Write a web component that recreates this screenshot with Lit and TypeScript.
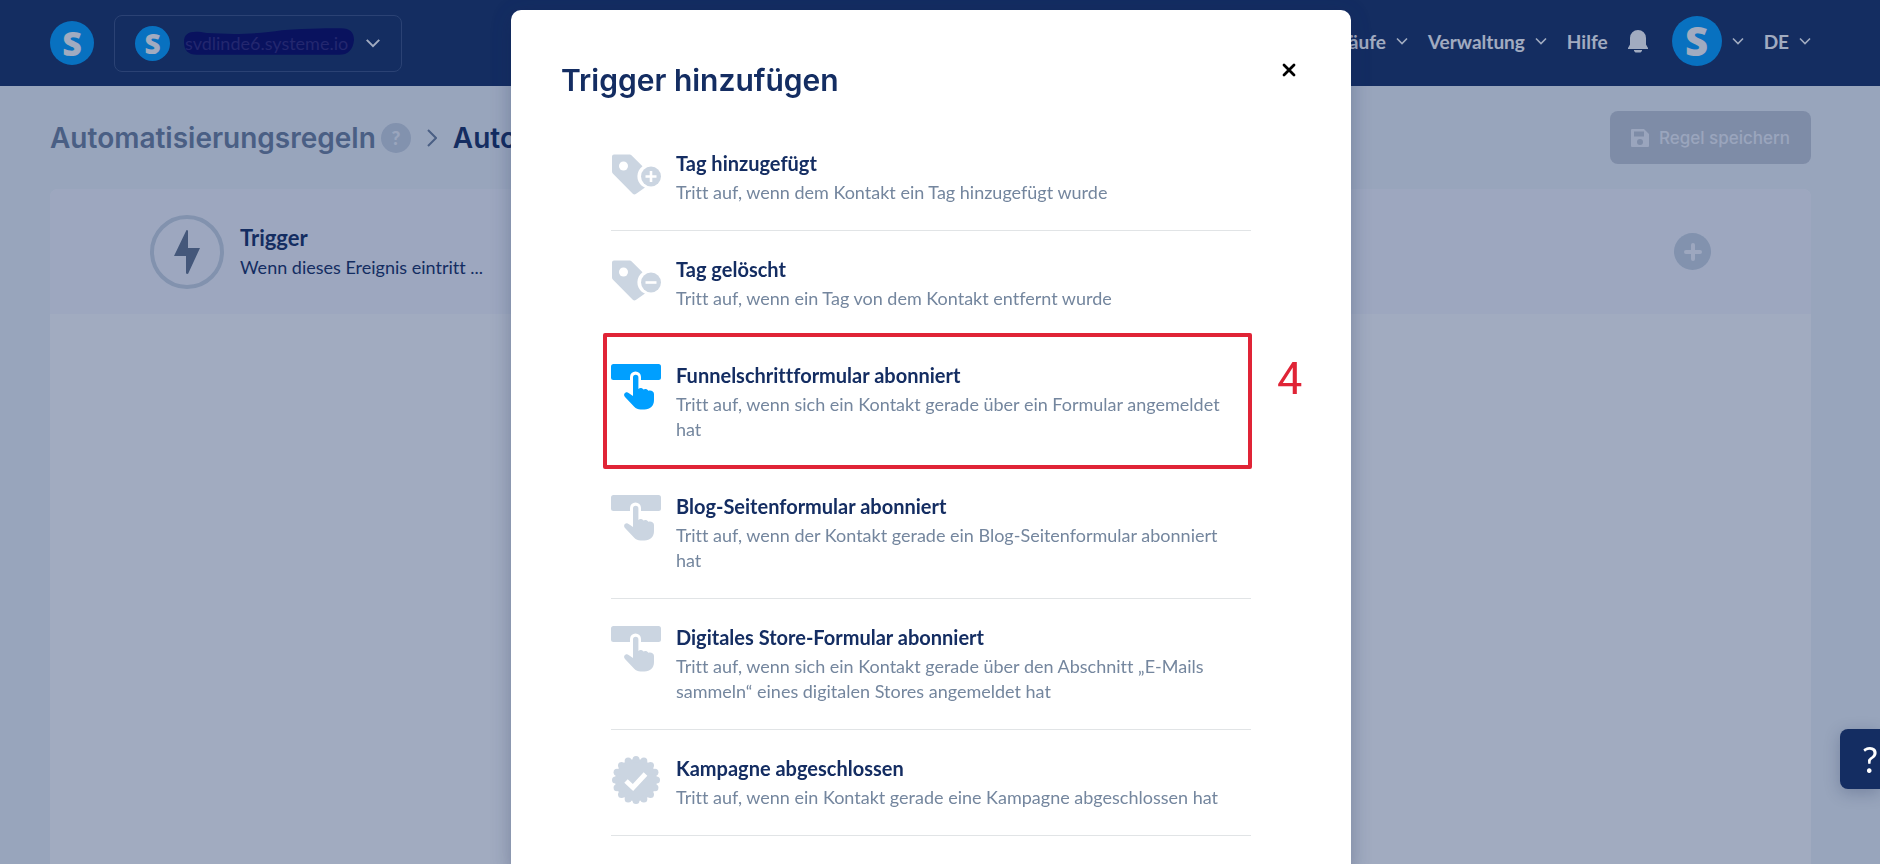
import { LitElement, html, css, svg } from "lit";
import { customElement, property } from "lit/decorators.js";
import { classMap } from "lit/directives/class-map.js";

type IconName = "tag-plus" | "tag-minus" | "press" | "badge";

interface TriggerOption {
  icon: IconName;
  title: string;
  text: string;
  selected?: boolean;
  step?: string;
}

const OPTIONS: TriggerOption[] = [
  { icon: "tag-plus", title: "Tag hinzugefügt", text: "Tritt auf, wenn dem Kontakt ein Tag hinzugefügt wurde" },
  { icon: "tag-minus", title: "Tag gelöscht", text: "Tritt auf, wenn ein Tag von dem Kontakt entfernt wurde" },
  {
    icon: "press",
    title: "Funnelschrittformular abonniert",
    text: "Tritt auf, wenn sich ein Kontakt gerade über ein Formular angemeldet hat",
    selected: true,
    step: "4",
  },
  {
    icon: "press",
    title: "Blog-Seitenformular abonniert",
    text: "Tritt auf, wenn der Kontakt gerade ein Blog-Seitenformular abonniert hat",
  },
  {
    icon: "press",
    title: "Digitales Store-Formular abonniert",
    text: "Tritt auf, wenn sich ein Kontakt gerade über den Abschnitt „E-Mails sammeln“ eines digitalen Stores angemeldet hat",
  },
  {
    icon: "badge",
    title: "Kampagne abgeschlossen",
    text: "Tritt auf, wenn ein Kontakt gerade eine Kampagne abgeschlossen hat",
  },
];

const tagShape = svg`
  <path d="M3 4.500h15.500a3 3 0 0 1 2.200.9L31.500 16.200a12.500 12.500 0 0 0-.5 19.800l3 1.500-9.200 6.500a2.500 2.500 0 0 1-3-.3L1.800 23.400A3 3 0 0 1 1 21.300V6.500a2 2 0 0 1 2-2z" fill="currentColor"/>
  <circle cx="12.500" cy="16" r="4.500" fill="#fff"/>
  <circle cx="40" cy="26.500" r="12.500" fill="#fff"/>
  <circle cx="40" cy="26.500" r="10" fill="currentColor"/>`;

// Rosette outline: sixteen rounded scallops around the centre.
const scallops = Array.from({ length: 16 }, (_, i) => {
  const a = (i * Math.PI) / 8;
  return svg`<circle cx=${25 + 20.5 * Math.sin(a)} cy=${25 - 20.5 * Math.cos(a)} r="3.500"/>`;
});

const ICONS = {
  "tag-plus": svg`${tagShape}<path d="M40 21v11M34.500 26.500h11" stroke="#fff" stroke-width="2.600"/>`,
  "tag-minus": svg`${tagShape}<path d="M34.500 26.500h11" stroke="#fff" stroke-width="2.600"/>`,
  press: svg`
    <rect x="0" y="2" width="50" height="16" rx="2.500" fill="currentColor"/>
    <path d="M19 19v-4a5.500 5.500 0 0 1 11 0v4z" fill="#fff"/>
    <path d="M22 15.500a2.700 2.700 0 0 1 5.400 0V27c1.500-1.500 4-1 5 .5 1.600-1 4-.5 4.900 1.200 2.500-.9 5.700.3 5.700 3.300v6c0 6-4 9.500-9.500 9.500h-4c-2.500 0-4.500-1-6.300-2.800L14 35c-2.500-2.800.8-6 3.600-4.100L22 34z" fill="currentColor"/>`,
  badge: svg`
    <g fill="currentColor"><circle cx="25" cy="25" r="21"/>${scallops}</g>
    <path d="M15 26l7 6.500L34.500 19" fill="none" stroke="#fff" stroke-width="5"/>`,
};

const chevron = html`<svg class="chevron" viewBox="0 0 12 8" aria-hidden="true">
  <path d="M1 1.500l5 5 5-5" fill="none" stroke="currentColor" stroke-width="1.600" />
</svg>`;

@customElement("trigger-option")
class TriggerOptionRow extends LitElement {
  @property({ attribute: false }) option!: TriggerOption;

  static styles = css`
    :host { display: block; position: relative; border-bottom: 1px solid #e1e4e6; }
    .row {
      display: flex; align-items: flex-start; gap: 15px; width: 100%;
      padding: 25px 0; border: 0; background: none; text-align: left;
      font: inherit; color: inherit; cursor: pointer;
    }
    .icon { flex: none; width: 50px; height: 50px; color: #cbd5e1; }
    .row.selected .icon { color: #009fff; }
    .body { display: flex; flex-direction: column; gap: 3px; padding-right: 10px; }
    .title { color: #142d62; font-weight: 700; font-size: 20px; line-height: 27px; }
    .text { color: #74869e; font-size: 18px; line-height: 25px; }
    .frame { position: absolute; inset: -4px -1px -2px -8px; border: 4px solid #e02436; border-radius: 2px; pointer-events: none; }
    .step { position: absolute; left: 100%; top: 16px; margin-left: 26px; color: #e02436; font: 400 45px/52px Roboto, sans-serif; }
  `;

  render() {
    const o = this.option;
    return html`
      <button class=${classMap({ row: true, selected: !!o.selected })} type="button">
        <svg class="icon" viewBox="0 0 50 50" aria-hidden="true">${ICONS[o.icon]}</svg>
        <span class="body">
          <span class="title">${o.title}</span>
          <span class="text">${o.text}</span>
        </span>
      </button>
      ${o.step ? html`<div class="frame"></div><div class="step">${o.step}</div>` : null}
    `;
  }
}

@customElement("app-root")
class AppRoot extends LitElement {
  static styles = css`
    :host {
      display: flex; flex-direction: column; height: 100vh; overflow: hidden;
      background: #f1f5f9; color: #142d62; font-family: Lato, sans-serif; font-size: 18px;
      font-variant-ligatures: none;
    }
    * { box-sizing: border-box; }
    button { font: inherit; color: inherit; background: none; border: 0; padding: 0; cursor: pointer; }
    a { color: inherit; text-decoration: none; }
    h1, h2, p { margin: 0; padding: 0; }

    .top { display: flex; align-items: center; height: 86px; padding: 0 69px 0 50px; background: #142d62; color: #fff; }
    .logo {
      display: flex; align-items: center; justify-content: center; flex: none;
      width: 44px; height: 44px; border-radius: 50%; background: #009fff; color: #fff;
      font: 800 34px/1 "Open Sans", sans-serif;
    }
    .logo.small { width: 35px; height: 35px; margin-right: 3px; font-size: 28px; }
    .logo.large { width: 50px; height: 50px; font-size: 40px; }
    .account {
      display: flex; align-items: center; gap: 10px; height: 57px; margin-left: 20px;
      padding: 0 20px; border: 1px solid #3b5180; border-radius: 8px;
    }
    .account .chevron { width: 16px; height: 10px; }
    .domain { display: grid; align-items: center; width: 172px; height: 30px; }
    .domain > * { grid-area: 1 / 1; }
    .domain span { color: #2d2478; padding-left: 2px; text-align: left; }
    .domain svg { width: 172px; height: 30px; }
    .chevron { flex: none; width: 12px; height: 8px; }
    .nav { display: flex; align-items: center; gap: 20px; margin-left: auto; margin-bottom: 4px; font-weight: 700; font-size: 19px; }
    .nav button { display: flex; align-items: center; gap: 10px; }
    .bell { width: 20px; height: 23px; display: block; }
    .nav .avatar { margin-left: 4px; }

    .crumbs { display: flex; align-items: center; padding: 25px 69px 25px 50px; font-family: Inter, sans-serif; }
    .crumbs h1 { display: flex; align-items: center; font-size: 28px; font-weight: 600; line-height: 34px; white-space: nowrap; }
    .crumbs a { color: #6e809b; }
    .hint {
      display: flex; align-items: center; justify-content: center; width: 30px; height: 30px; margin-left: 5px;
      border-radius: 50%; background: #cbd5e1; color: #f3f5fa; font: 900 19px/1 Lato, sans-serif;
    }
    .sep { width: 10px; height: 18px; margin: 0 16px; color: #6e809b; }
    .save {
      display: flex; align-items: center; gap: 10px; height: 53px; margin-left: auto; padding: 0 21px;
      border-radius: 8px; background: #c5cbd5; color: #f3f5fa; font-weight: 500; font-size: 17px; white-space: nowrap;
    }
    .save svg { width: 18px; height: 18px; }

    .card { flex: 1; margin: 0 69px 0 50px; border-radius: 8px 8px 0 0; background: #fff; overflow: hidden; }
    .card-head { display: flex; align-items: center; gap: 16px; height: 125px; padding: 0 100px; background: #f8f9fe; }
    .bolt {
      display: flex; align-items: center; justify-content: center; width: 74px; height: 74px;
      border: 4px solid #cbd5e1; border-radius: 50%;
    }
    .bolt svg { width: 26px; height: 44px; }
    .card-head h2 { font-size: 22px; line-height: 30px; font-weight: 700; }
    .card-head p { line-height: 28px; }
    .add {
      display: flex; align-items: center; justify-content: center; width: 37px; height: 37px; margin-left: auto;
      border-radius: 50%; background: #cbd5e1;
    }
    .add svg { width: 18px; height: 18px; }

    .overlay {
      position: fixed; inset: 0; display: flex; justify-content: center; align-items: flex-start;
      padding: 10px 18px 0 0; overflow: hidden; background: rgba(20, 45, 98, 0.4);
    }
    .modal {
      width: 840px; min-height: 100vh; padding: 50px 50px 0; border-radius: 10px; background: #fff;
      box-shadow: 0 4px 20px rgba(20, 35, 80, 0.3);
    }
    .modal-head { display: flex; align-items: flex-start; justify-content: space-between; height: 65px; }
    .modal-head h2 { font: 600 30px/40px Inter, sans-serif; }
    .close { padding: 3px 5px; }
    .close svg { display: block; width: 14px; height: 14px; }
    .options { padding: 0 50px; }

    .help {
      position: fixed; right: 0; bottom: 75px; width: 40px; height: 60px; padding-left: 20px;
      border-radius: 8px 0 0 8px; background: #142d62; color: #fff; font-size: 36px; line-height: 60px;
      box-shadow: 0 4px 16px rgba(20, 35, 80, 0.25);
    }
  `;

  render() {
    return html`
      <header class="top">
        <a class="logo" href="#" aria-label="Startseite">S</a>
        <button class="account" type="button">
          <span class="logo small">S</span>
          <span class="domain">
            <svg viewBox="0 0 174 30" aria-hidden="true">
              <path d="M1 14C1 4 9 2 24 5 60 7 80 5 100 2 130 0 150 0 160 0c9 0 13 4 13 12-1 10-6 15-15 15H14C5 27 1 22 1 14z" fill="#02005d" />
            </svg>
            <span>svdlinde6.systeme.io</span>
          </span>
          ${chevron}
        </button>
        <nav class="nav">
          <button type="button">Verkäufe ${chevron}</button>
          <button type="button">Verwaltung ${chevron}</button>
          <a href="#">Hilfe</a>
          <button type="button" aria-label="Mitteilungen">
            <svg class="bell" viewBox="0 0 20 23" aria-hidden="true">
              <path d="M10 0a8 8 0 0 1 8 8v6.500l2 3.500v1H0v-1l2-3.500V8a8 8 0 0 1 8-8zM6 20h8v1l-1.500 1.500h-5L6 21z" fill="currentColor" />
            </svg>
          </button>
          <button class="avatar" type="button" aria-label="Konto"><span class="logo large">S</span>${chevron}</button>
          <button type="button">DE ${chevron}</button>
        </nav>
      </header>

      <div class="crumbs">
        <h1>
          <a href="#">Automatisierungsregeln</a>
          <span class="hint">?</span>
          <svg class="sep" viewBox="0 0 10 18" aria-hidden="true">
            <path d="M1 1l8 8-8 8" fill="none" stroke="currentColor" stroke-width="2" />
          </svg>
          <span>Automatisierung</span>
        </h1>
        <button class="save" type="button">
          <svg viewBox="0 0 18 18" aria-hidden="true">
            <path fill-rule="evenodd" fill="currentColor" d="M1 0h12l5 5v12a1 1 0 0 1-1 1H1a1 1 0 0 1-1-1V1a1 1 0 0 1 1-1zm2 2.500v5h10v-5zM9 10a3 3 0 1 0 0 6 3 3 0 0 0 0-6z" />
          </svg>
          Regel speichern
        </button>
      </div>

      <main class="card">
        <div class="card-head">
          <span class="bolt">
            <svg viewBox="0 0 26 44" aria-hidden="true"><path d="M12.500 0l1.500.5V18h12L14 44l-2-.5V26H0z" fill="#64748b" /></svg>
          </span>
          <div>
            <h2>Trigger</h2>
            <p>Wenn dieses Ereignis eintritt ...</p>
          </div>
          <button class="add" type="button" aria-label="Hinzufügen">
            <svg viewBox="0 0 18 18" aria-hidden="true"><path d="M9 2v14M2 9h14" stroke="#f8f9fe" stroke-width="4" stroke-linecap="round" /></svg>
          </button>
        </div>
      </main>

      <div class="overlay">
        <section class="modal" role="dialog" aria-modal="true" aria-labelledby="modal-title">
          <div class="modal-head">
            <h2 id="modal-title">Trigger hinzufügen</h2>
            <button class="close" type="button" aria-label="Schließen">
              <svg viewBox="0 0 14 14" aria-hidden="true"><path d="M2 2l10 10M12 2L2 12" stroke="#000" stroke-width="2.800" stroke-linecap="round" /></svg>
            </button>
          </div>
          <div class="options">
            ${OPTIONS.map((o) => html`<trigger-option .option=${o}></trigger-option>`)}
          </div>
        </section>
      </div>

      <button class="help" type="button" aria-label="Hilfe öffnen">?</button>
    `;
  }
}
